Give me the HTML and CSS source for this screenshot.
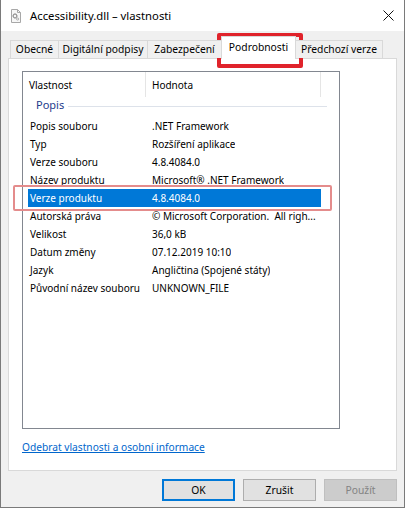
FILE: index.html
```html
<!DOCTYPE html>
<html lang="cs">
<head>
<meta charset="utf-8">
<title>Accessibility.dll – vlastnosti</title>
<link rel="stylesheet" href="styles.css">
</head>
<body>
<div class="win">
  <div class="titlebar">
    <svg class="appicon" width="12" height="14" viewBox="0 0 12 14">
      <path d="M1.5 0.5 H7.5 L10.5 3.5 V13.5 H1.5 Z" fill="#f7f7f7" stroke="#a8a8a8" stroke-width="1"/>
      <path d="M7.5 0.5 V3.5 H10.5" fill="none" stroke="#a8a8a8" stroke-width="1"/>
      <circle cx="5" cy="7" r="1.8" fill="none" stroke="#9a9a9a" stroke-width="1.2"/>
      <path d="M5 4.4 V5.2 M5 8.8 V9.6 M2.4 7 H3.2 M6.8 7 H7.6" stroke="#9a9a9a" stroke-width="1"/>
      <circle cx="7.6" cy="10" r="1.1" fill="none" stroke="#b0b0b0" stroke-width="1"/>
    </svg>
    <span class="title">Accessibility.dll – vlastnosti</span>
    <svg class="close" width="11" height="11" viewBox="0 0 11 11">
      <path d="M0.5 0.5 L10.5 10.5 M10.5 0.5 L0.5 10.5" stroke="#111" stroke-width="1"/>
    </svg>
  </div>
  <div class="client">
    <div class="tabs">
      <div class="tab t1">Obecné</div>
      <div class="tab t2">Digitální podpisy</div>
      <div class="tab t3">Zabezpečení</div>
      <div class="tab sel">Podrobnosti</div>
      <div class="tab t5">Předchozí verze</div>
    </div>
    <div class="panel">
      <div class="list">
        <div class="lhead">
          <div class="hc c1">Vlastnost</div>
          <div class="hc c2">Hodnota</div>
          <div class="hc c3"></div>
        </div>
        <div class="group"><span class="gname">Popis</span><span class="gline"></span></div>
        <div class="row"><span class="k">Popis souboru</span><span class="v">.NET Framework</span></div>
        <div class="row"><span class="k">Typ</span><span class="v">Rozšíření aplikace</span></div>
        <div class="row"><span class="k">Verze souboru</span><span class="v">4.8.4084.0</span></div>
        <div class="row"><span class="k">Název produktu</span><span class="v">Microsoft® .NET Framework</span></div>
        <div class="row selected"><span class="k">Verze produktu</span><span class="v">4.8.4084.0</span></div>
        <div class="row"><span class="k">Autorská práva</span><span class="v">© Microsoft Corporation.  All righ...</span></div>
        <div class="row"><span class="k">Velikost</span><span class="v">36,0 kB</span></div>
        <div class="row"><span class="k">Datum změny</span><span class="v">07.12.2019 10:10</span></div>
        <div class="row"><span class="k">Jazyk</span><span class="v">Angličtina (Spojené státy)</span></div>
        <div class="row"><span class="k">Původní název souboru</span><span class="v">UNKNOWN_FILE</span></div>
      </div>
      <a class="link" href="#">Odebrat vlastnosti a osobní informace</a>
    </div>
    <div class="buttons">
      <button class="btn default">OK</button>
      <button class="btn">Zrušit</button>
      <button class="btn disabled">Použít</button>
    </div>
  </div>
  <div class="mark tabmark"></div>
  <div class="mark rowmark"></div>
</div>
</body>
</html>
```

FILE: styles.css
```css
html, body {
  margin: 0;
  padding: 0;
  background: #ffffff;
}

body {
  font-family: "Noto Sans", "Open Sans", sans-serif;
  font-size: 10px;
  color: #000;
}

.win {
  position: relative;
  width: 405px;
  height: 508px;
  box-sizing: border-box;
  border: 1px solid #7a7a7a;
  border-top: 0;
  background: #f0f0f0;
  display: flex;
  flex-direction: column;
}

.titlebar {
  height: 31px;
  flex: none;
  background: #ffffff;
  display: flex;
  align-items: center;
}

.appicon {
  margin-left: 9px;
  margin-top: 1px;
  flex: none;
}

.title {
  margin-left: 8px;
  font-size: 11.3px;
  color: #000;
  line-height: 16px;
}

.close {
  margin-left: auto;
  margin-right: 10px;
  flex: none;
}

.client {
  flex: 1;
  display: flex;
  flex-direction: column;
  padding: 5px 7px 0 7px;
}

.tabs {
  position: relative;
  z-index: 1;
  display: flex;
  height: 23px;
  margin-bottom: -1px;
  margin-left: 2px;
}

.tab {
  box-sizing: border-box;
  height: 18px;
  margin-top: 4px;
  border: 1px solid #d9d9d9;
  border-bottom: 0;
  background: #f0f0f0;
  font-size: 10.3px;
  line-height: 16px;
  text-align: center;
  white-space: nowrap;
  overflow: hidden;
}

.t1 { width: 49px; }
.t2 { width: 90px; margin-left: -1px; }
.t3 { width: 75px; margin-left: -1px; }
.t5 { width: 88px; margin-left: -1px; }

.tab.sel {
  width: 75px;
  margin-left: -1px;
  margin-top: 0;
  height: 23px;
  background: #ffffff;
  line-height: 20px;
}

.panel {
  box-sizing: border-box;
  height: 413px;
  background: #ffffff;
  border: 1px solid #d9d9d9;
  padding: 12px 0 0 13px;
  display: flex;
  flex-direction: column;
  align-items: flex-start;
}

.list {
  box-sizing: border-box;
  width: 318px;
  height: 358px;
  border: 1px solid #828790;
  background: #ffffff;
}

.lhead {
  display: flex;
  height: 25px;
  align-items: stretch;
}

.hc {
  display: flex;
  align-items: center;
  box-sizing: border-box;
  border-right: 1px solid #e5e5e5;
  white-space: nowrap;
}

.c1 { width: 123px; padding-left: 6px; }
.c2 { width: 175px; padding-left: 6px; }
.c3 { width: 10px; border-right: 0; }

.group {
  height: 20px;
  display: flex;
  align-items: flex-start;
  padding-left: 13px;
}

.gname {
  font-size: 11px;
  line-height: 16px;
  color: #1e3c8c;
}

.gline {
  width: 259px;
  height: 1px;
  margin-top: 9px;
  margin-left: 4px;
  background: #dde2ea;
}

.row {
  display: flex;
  align-items: center;
  height: 18px;
  width: 293px;
  margin-left: 5px;
  white-space: nowrap;
}

.row .k {
  width: 118px;
  padding-left: 2px;
  box-sizing: border-box;
  flex: none;
}

.row .v {
  padding-left: 6px;
  white-space: pre;
  overflow: hidden;
}

.row.selected {
  background: #0078d7;
  color: #ffffff;
}

.link {
  margin-top: 10px;
  font-size: 10.2px;
  line-height: 16px;
  color: #0066cc;
  text-decoration: underline;
}

.buttons {
  display: flex;
  justify-content: flex-end;
  gap: 8px;
  margin-top: 8px;
}

.btn {
  box-sizing: border-box;
  width: 73px;
  height: 22px;
  padding: 0;
  font-family: "Noto Sans", "Open Sans", sans-serif;
  font-size: 10.3px;
  color: #000;
  background: #e1e1e1;
  border: 1px solid #adadad;
  border-radius: 0;
}

.btn.default {
  border: 2px solid #0078d7;
}

.btn.disabled {
  background: #cccccc;
  border-color: #bfbfbf;
  color: #838383;
}

.mark {
  position: absolute;
  box-sizing: border-box;
  pointer-events: none;
}

.tabmark {
  left: 216px;
  top: 33px;
  width: 86px;
  height: 35px;
  border: 4px solid #e0232b;
  border-radius: 2px;
}

.rowmark {
  left: 12px;
  top: 185px;
  width: 319px;
  height: 26px;
  border: 2px solid #e48c8c;
  border-radius: 2px;
}
```
